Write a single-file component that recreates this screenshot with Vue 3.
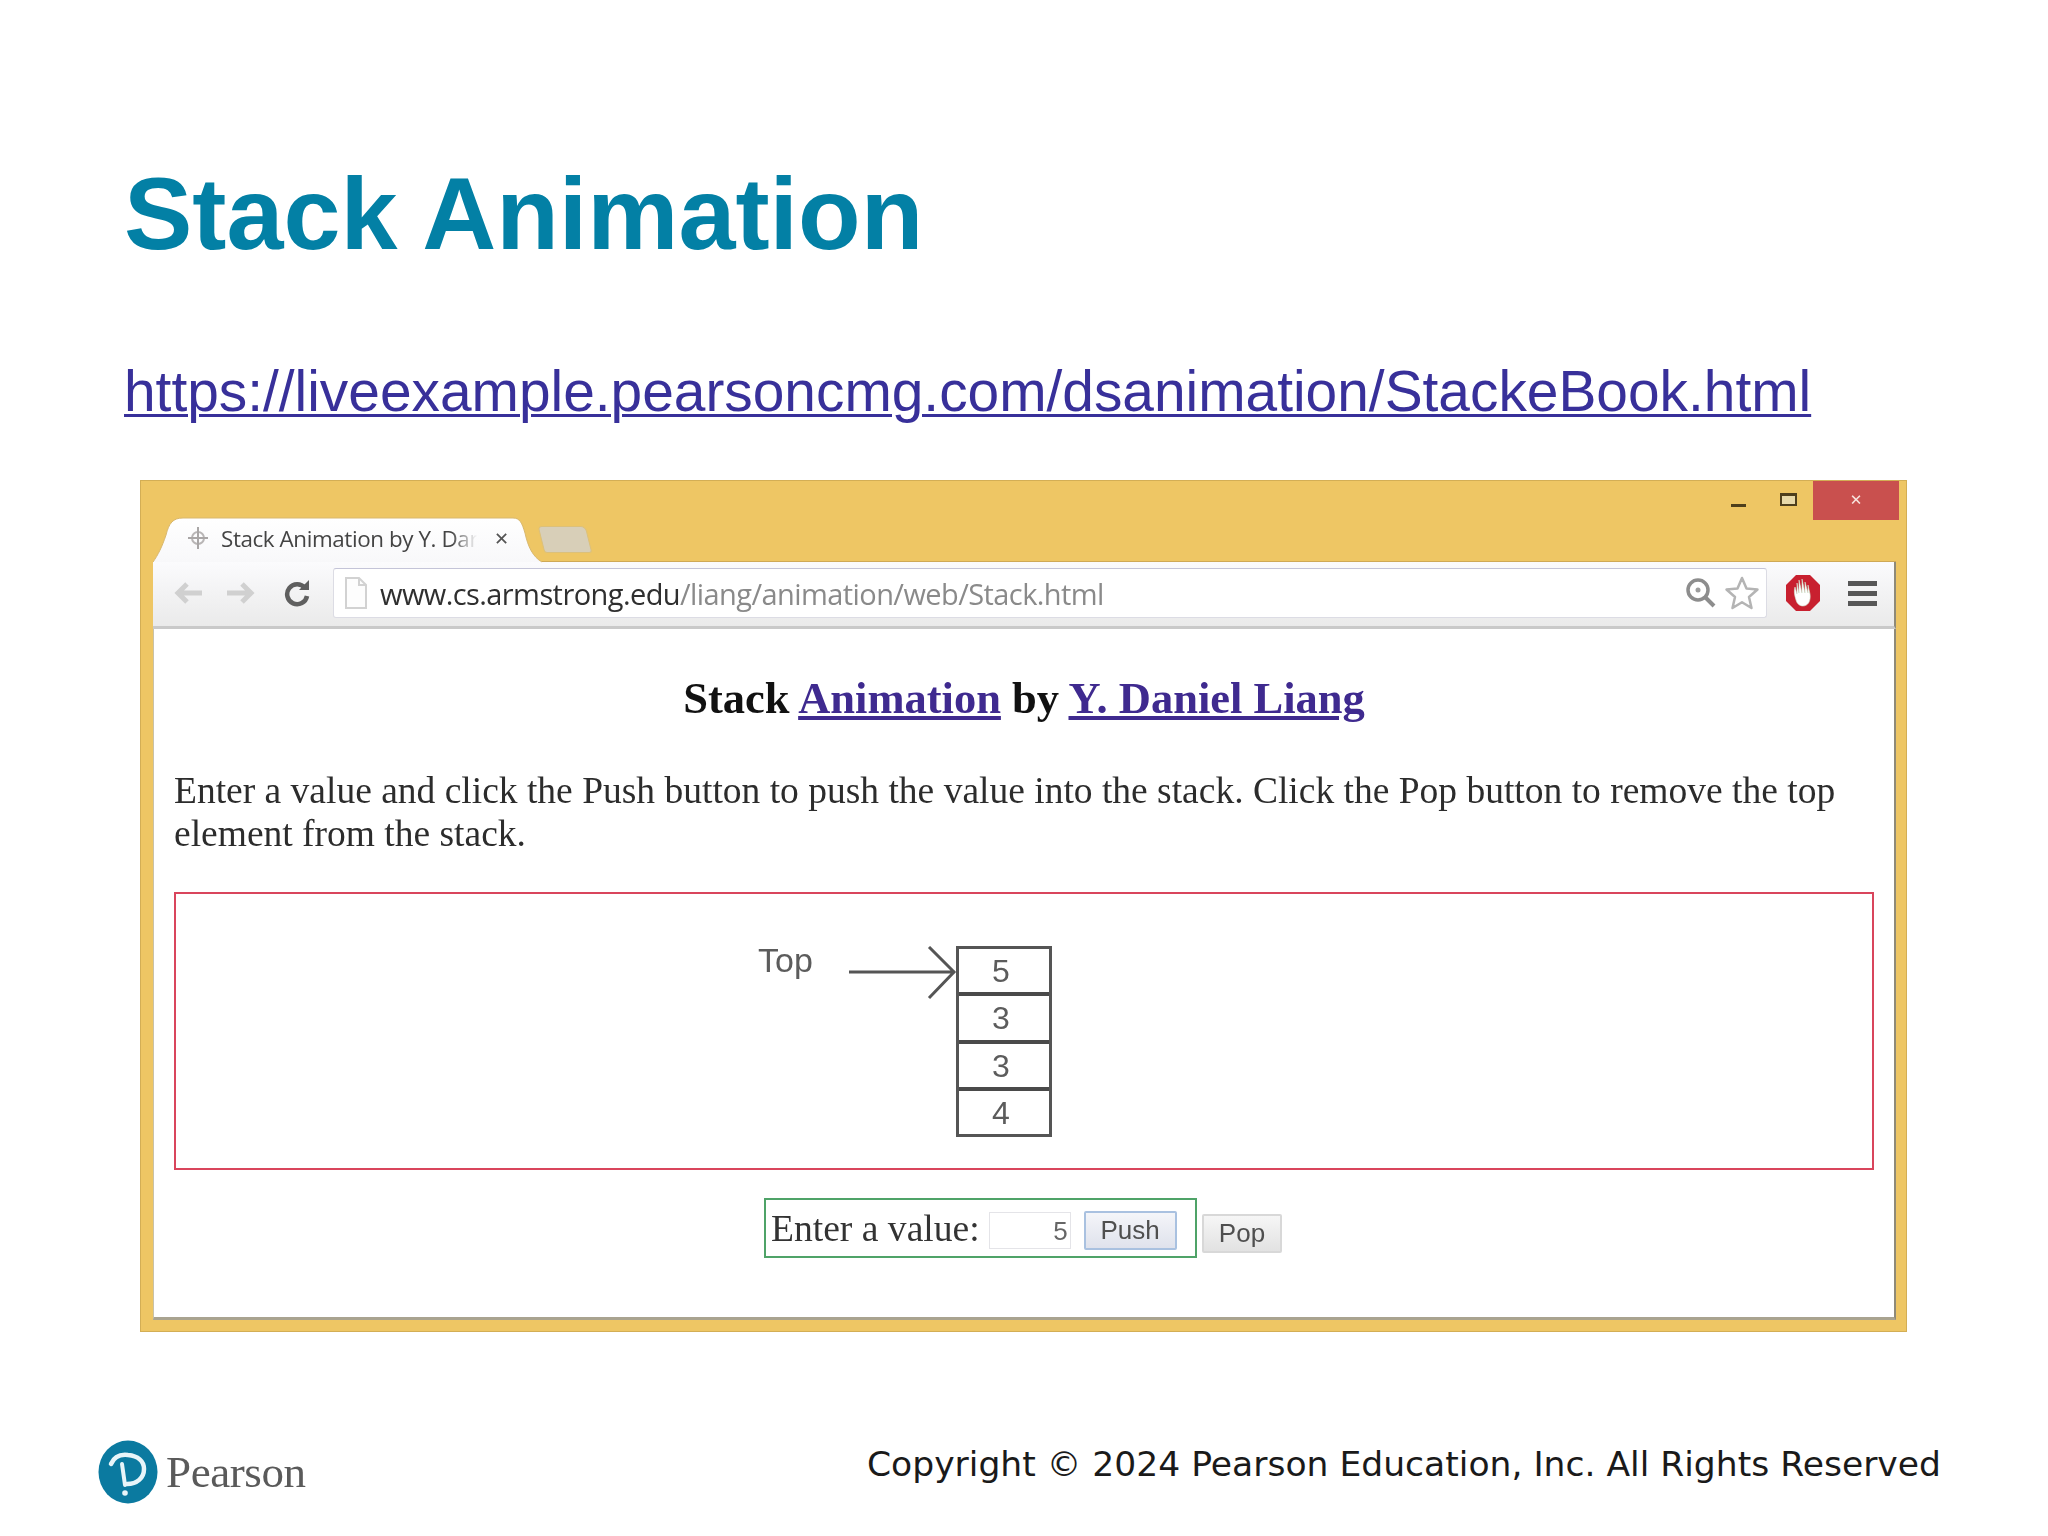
<script setup>
const stackValues = [5, 3, 3, 4]
</script>

<template>
  <main class="slide">
    <h1 class="title">Stack Animation</h1>
    <a class="url" href="#">https://liveexample.pearsoncmg.com/dsanimation/StackeBook.html</a>

    <section class="window">
      <div class="titlebar">
        <div class="tab">
          <svg class="tab-shape" width="390" height="46" viewBox="0 0 390 46">
            <defs>
              <linearGradient id="tabfill" x1="0" y1="0" x2="0" y2="1">
                <stop offset="0" stop-color="#ffffff" />
                <stop offset="1" stop-color="#f8f8fa" />
              </linearGradient>
            </defs>
            <path d="M0 45 C5 38 9 30 13 18 C16 6 20 1 30 1 L360 1 C367 1 369 6 372 16 C375 30 380 40 389 45" fill="url(#tabfill)" stroke="#d9b86e" />
          </svg>
          <svg class="favicon" width="22" height="24" viewBox="0 0 22 24">
            <circle cx="11" cy="12" r="6" fill="none" stroke="#b9b6b6" stroke-width="2" />
            <path d="M11 1V23M1 12H21" stroke="#a9a6a6" stroke-width="2" />
          </svg>
          <span class="tab-title">Stack Animation by Y. Dar</span>
          <span class="tab-close">✕</span>
        </div>
        <div class="newtab"></div>
        <div class="controls">
          <span class="ctl-min"></span>
          <span class="ctl-max"></span>
          <span class="ctl-close">✕</span>
        </div>
      </div>

      <div class="toolbar">
        <svg class="nav-arrows" width="85" height="30" viewBox="0 0 85 30">
          <path d="M30 15H7M15 6L6 15L15 24" fill="none" stroke="#d0d0d0" stroke-width="5" />
          <path d="M55 15H78M70 6L79 15L70 24" fill="none" stroke="#d0d0d0" stroke-width="5" />
        </svg>
        <svg class="reload" width="28" height="28" viewBox="0 0 28 28">
          <path d="M22 9A10 10 0 1 0 24 17" fill="none" stroke="#5f5f5f" stroke-width="4.5" />
          <path d="M16 11H26V1Z" fill="#5f5f5f" />
        </svg>
        <div class="omnibox">
          <svg class="page-icon" width="24" height="34" viewBox="0 0 24 34">
            <path d="M2 2H15L22 9V32H2Z" fill="#fdfdfd" stroke="#d2d2d2" stroke-width="2" />
            <path d="M15 2V9H22" fill="none" stroke="#d2d2d2" stroke-width="2" />
          </svg>
          <span class="address"><span class="host">www.cs.armstrong.edu</span>/liang/animation/web/Stack.html</span>
          <svg class="zoom-icon" width="32" height="32" viewBox="0 0 32 32">
            <circle cx="13" cy="13" r="10" fill="none" stroke="#8d8d8d" stroke-width="3.5" />
            <circle cx="13" cy="13" r="2.5" fill="#9d9d9d" />
            <path d="M20 20L29 29" stroke="#8d8d8d" stroke-width="4" />
          </svg>
          <svg class="star-icon" width="36" height="36" viewBox="0 0 36 36">
            <path d="M18 3L22.5 13.5L33.5 14.5L25 22L27.5 33L18 27.2L8.5 33L11 22L2.5 14.5L13.5 13.5Z" fill="#fff" stroke="#b4b4b4" stroke-width="2.5" stroke-linejoin="round" />
          </svg>
        </div>
        <svg class="adblock" width="36" height="38" viewBox="0 0 36 38">
          <path d="M11 1H25L35 11V27L25 37H11L1 27V11Z" fill="#c8202f" />
          <path d="M11 26C9 20 9 16 10 13L12 20V9L14 19V6L17 19V5L20 19V8L23 19V11L25 20C26 27 23 32 18 32C15 32 12 30 11 26Z" fill="#fff" stroke="#cfe5cf" stroke-width=".6" />
        </svg>
        <div class="menu"><i></i><i></i><i></i></div>
      </div>

      <div class="page">
        <h2 class="page-heading">Stack <a href="#">Animation</a> by <a href="#">Y. Daniel Liang</a></h2>
        <p class="page-text">Enter a value and click the Push button to push the value into the stack. Click the Pop button to remove the top element from the stack.</p>

        <div class="stage">
          <span class="top-label">Top</span>
          <svg class="arrow" width="112" height="54" viewBox="0 0 112 54">
            <path d="M2 26H108M82 1L107 26L82 52" fill="none" stroke="#555" stroke-width="3" />
          </svg>
          <div class="stack">
            <div v-for="(v, i) in stackValues" :key="i" class="cell">{{ v }}</div>
          </div>
        </div>

        <div class="form-row">
          <div class="form-box">
            <label class="form-label">Enter a value:</label>
            <div class="value-input">5</div>
            <button class="btn btn-push">Push</button>
          </div>
          <button class="btn btn-pop">Pop</button>
        </div>
      </div>
    </section>

    <footer class="footer">
      <div class="brand">
        <svg width="60" height="64" viewBox="-30 -32 60 64">
          <ellipse rx="29.5" ry="31.5" fill="#0b7aa0" />
          <path d="M-17 -8C-14 -15 -8 -18 0 -17C10 -16 16 -11 16 -3C16 6 9 12 -1 12" fill="none" stroke="#e8f5f9" stroke-width="4.5" stroke-linecap="round" />
          <path d="M-6 -8L-3 13" stroke="#e8f5f9" stroke-width="4" stroke-linecap="round" />
          <circle cx="-3" cy="21" r="2.8" fill="#e8f5f9" />
        </svg>
        <span class="brand-name">Pearson</span>
      </div>
      <p class="copyright">Copyright © 2024 Pearson Education, Inc. All Rights Reserved</p>
    </footer>
  </main>
</template>

<style scoped>
.slide {
  width: 2048px;
  height: 1536px;
  background: #fff;
  overflow: hidden;
  display: flex;
  flex-direction: column;
  align-items: flex-start;
  font-family: "Liberation Sans", Arial, sans-serif;
}
.title {
  margin: 155px 0 0 124px;
  font-size: 102.5px;
  line-height: 118px;
  font-weight: 700;
  color: #0380a5;
}
.url {
  margin: 84px 0 0 124px;
  font-size: 56.85px;
  line-height: 70px;
  color: #38309a;
  text-decoration: underline;
  text-decoration-thickness: 3px;
  text-underline-offset: 3px;
}
.window {
  margin: 53px 0 0 140px;
  width: 1767px;
  height: 852px;
  box-sizing: border-box;
  background: #eec664;
  border: 1px solid #d3ae55;
  padding: 0 10px 11px 12px;
  display: flex;
  flex-direction: column;
  filter: blur(0.7px);
}
.titlebar {
  height: 81px;
  display: flex;
  flex: none;
}
.tab {
  width: 390px;
  height: 46px;
  align-self: flex-end;
  position: relative;
  display: flex;
  align-items: center;
  padding: 0 0 4px 34px;
  box-sizing: border-box;
  margin-bottom: -1px;
}
.tab-shape {
  position: absolute;
  left: 0;
  top: 0;
}
.favicon,
.tab-title,
.tab-close {
  position: relative;
}
.tab-title {
  margin-left: 12px;
  width: 256px;
  font-family: "Open Sans", sans-serif;
  font-size: 22.4px;
  letter-spacing: -0.4px;
  color: #444;
  white-space: nowrap;
  overflow: hidden;
  -webkit-mask-image: linear-gradient(90deg, #000 90%, transparent);
  mask-image: linear-gradient(90deg, #000 90%, transparent);
}
.tab-close {
  margin-left: 17px;
  font-size: 18px;
  font-weight: 700;
  color: #555;
  font-family: "DejaVu Sans", sans-serif;
}
.newtab {
  width: 46px;
  height: 25px;
  margin: 45px 0 0 -2px;
  background: #d8cfb8;
  border: 1px solid #dcc07a;
  border-radius: 4px 5px 3px 3px;
  transform: skewX(14deg);
}
.controls {
  margin-left: auto;
  display: flex;
  align-self: flex-start;
  align-items: flex-start;
  flex: none;
}
.ctl-min {
  width: 15px;
  height: 3px;
  margin: 23px 34px 0 0;
  background: #4e3f1c;
}
.ctl-max {
  width: 17px;
  height: 13px;
  box-sizing: border-box;
  margin: 12px 16px 0 0;
  border: 2px solid #4e3f1c;
  border-top-width: 3px;
  background: #e8d9a8;
}
.ctl-close {
  width: 86px;
  height: 39px;
  background: #c9504e;
  color: #f8e6e0;
  text-align: center;
  font-family: "DejaVu Sans", sans-serif;
  font-size: 15px;
  font-weight: 700;
  line-height: 38px;
  margin-right: -3px;
}
.toolbar {
  height: 67px;
  flex: none;
  display: flex;
  align-items: center;
  box-sizing: border-box;
  background: linear-gradient(#fbfbfd, #eaeaea);
  border-bottom: 3px solid #c9c9c9;
  border-right: 2px solid #8f8a78;
  box-shadow: 0 -1px 0 #cfa956;
  padding: 0 16px 2px 19px;
}
.nav-arrows {
  flex: none;
}
.reload {
  flex: none;
  margin-left: 26px;
}
.omnibox {
  flex: none;
  margin-left: 22px;
  width: 1434px;
  height: 50px;
  box-sizing: border-box;
  background: #fff;
  border: 1px solid #dcdce4;
  border-top-color: #c4c4d8;
  border-radius: 3px;
  display: flex;
  align-items: center;
  padding-left: 10px;
}
.address {
  margin-left: 12px;
  font-family: "Open Sans", sans-serif;
  font-size: 29px;
  letter-spacing: -0.58px;
  color: #8a8a8a;
  white-space: nowrap;
}
.host {
  color: #2f2f2f;
}
.zoom-icon {
  flex: none;
  margin-left: auto;
}
.star-icon {
  flex: none;
  margin: 0 6px 0 7px;
}
.adblock {
  flex: none;
  margin-left: 18px;
}
.menu {
  flex: none;
  margin-left: 27px;
  width: 29px;
  display: flex;
  flex-direction: column;
  gap: 5px;
}
.menu i {
  display: block;
  height: 5px;
  background: #575757;
}
.page {
  flex: 1;
  background: #fff;
  border-right: 2px solid #8f8a78;
  border-bottom: 3px solid #a9a390;
  border-left: 1px solid #c9c2a8;
  padding: 0 20px 0 20px;
  font-family: "Liberation Serif", "Times New Roman", serif;
  color: #222;
}
.page-heading {
  margin: 44px 0 0;
  text-align: center;
  font-size: 44.5px;
  line-height: 50px;
  font-weight: 700;
  color: #111;
}
.page-heading a {
  color: #3f2a8f;
  text-decoration: underline;
}
.page-text {
  margin: 46px 0 0;
  font-size: 37.5px;
  line-height: 43px;
  color: #2c2c2c;
}
.stage {
  margin-top: 37px;
  height: 278px;
  width: 1700px;
  box-sizing: border-box;
  border: 2px solid #d9455c;
  position: relative;
}
.top-label {
  position: absolute;
  left: 582px;
  top: 46px;
  font-family: "Liberation Sans", Arial, sans-serif;
  font-size: 34px;
  line-height: 40px;
  color: #5c5c5c;
}
.arrow {
  position: absolute;
  left: 671px;
  top: 52px;
}
.stack {
  position: absolute;
  left: 780px;
  top: 52px;
  width: 96px;
  height: 191px;
  box-sizing: border-box;
  border: 3px solid #555;
  display: flex;
  flex-direction: column;
  font-family: "Liberation Sans", Arial, sans-serif;
}
.cell {
  flex: 1;
  display: flex;
  align-items: center;
  justify-content: center;
  padding: 2px 6px 0 0;
  font-size: 32px;
  color: #5c5c5c;
  border-bottom: 4px solid #4a4a4a;
}
.cell:last-child {
  border-bottom: 0;
}
.form-row {
  margin: 28px 0 0 590px;
  display: flex;
  align-items: flex-start;
}
.form-box {
  width: 433px;
  height: 60px;
  box-sizing: border-box;
  border: 2px solid #4fa368;
  display: flex;
  align-items: center;
  padding-left: 5px;
}
.form-label {
  font-size: 37.6px;
  line-height: 44px;
  color: #333;
  white-space: nowrap;
  margin-top: 2px;
}
.value-input {
  width: 82px;
  height: 37px;
  box-sizing: border-box;
  margin: 4px 0 0 9px;
  border: 1px solid #e4e4e8;
  text-align: right;
  padding-right: 2px;
  font-family: "Liberation Sans", Arial, sans-serif;
  font-size: 26px;
  line-height: 36px;
  color: #666;
}
.btn {
  height: 39px;
  padding: 0;
  font-family: "Liberation Sans", Arial, sans-serif;
  font-size: 26px;
  color: #4f4f4f;
  box-sizing: border-box;
}
.btn-push {
  width: 93px;
  margin: 5px 0 0 13px;
  border: 2px solid #a9c1e0;
  border-radius: 2px;
  background: linear-gradient(#f4f5f9, #dfe2ec);
}
.btn-pop {
  width: 80px;
  margin: 16px 0 0 5px;
  border: 2px solid #d8d8d8;
  border-radius: 2px;
  background: linear-gradient(#f6f6f6, #e2e2e2);
}
.footer {
  align-self: stretch;
  margin-top: 108px;
  padding: 0 107px 0 98px;
  display: flex;
  justify-content: space-between;
  align-items: flex-start;
}
.brand {
  display: flex;
  align-items: center;
  gap: 8px;
}
.brand-name {
  font-family: "Liberation Serif", serif;
  font-size: 45px;
  color: #5a5a5a;
  letter-spacing: -0.4px;
  filter: blur(0.6px);
}
.copyright {
  margin: 3px 0 0;
  font-family: "DejaVu Sans", sans-serif;
  font-size: 34.55px;
  line-height: 42px;
  color: #1a1a1a;
}
</style>
